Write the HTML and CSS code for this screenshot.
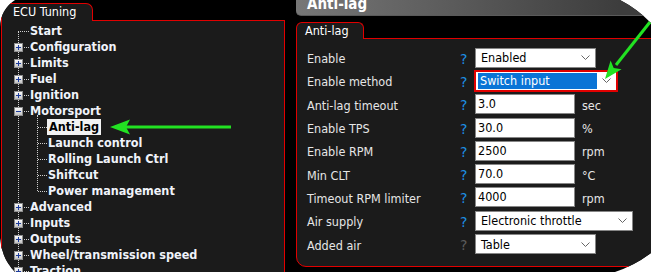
FILE: index.html
```html
<!DOCTYPE html>
<html lang="en">
	<head>
		<meta charset="UTF-8" />
		<meta name="viewport" content="width=device-width, initial-scale=1.0" />

		<link rel="stylesheet" href="styles.css">

		<title>ECU Tuning - Anti-lag</title>
	</head>
	<body>
		<div class="frame">
			<div class="nav">
				<div class="tab">ECU Tuning</div>
				<div class="nav-body">
					<div class="tree">
						<div class="node"><i class="dash long"></i><span class="label">Start</span></div>
						<div class="node"><i class="toggle plus"></i><i class="dash"></i><span class="label">Configuration</span></div>
						<div class="node"><i class="toggle plus"></i><i class="dash"></i><span class="label">Limits</span></div>
						<div class="node"><i class="toggle plus"></i><i class="dash"></i><span class="label">Fuel</span></div>
						<div class="node"><i class="toggle plus"></i><i class="dash"></i><span class="label">Ignition</span></div>
						<div class="node"><i class="toggle"></i><i class="dash"></i><span class="label">Motorsport</span></div>
						<div class="children">
							<div class="node"><i class="dash child"></i><span class="label selected">Anti-lag</span></div>
							<div class="node"><i class="dash child"></i><span class="label">Launch control</span></div>
							<div class="node"><i class="dash child"></i><span class="label">Rolling Launch Ctrl</span></div>
							<div class="node"><i class="dash child"></i><span class="label">Shiftcut</span></div>
							<div class="node"><i class="dash child"></i><span class="label">Power management</span></div>
						</div>
						<div class="node"><i class="toggle plus"></i><i class="dash"></i><span class="label">Advanced</span></div>
						<div class="node"><i class="toggle plus"></i><i class="dash"></i><span class="label">Inputs</span></div>
						<div class="node"><i class="toggle plus"></i><i class="dash"></i><span class="label">Outputs</span></div>
						<div class="node"><i class="toggle plus"></i><i class="dash"></i><span class="label">Wheel/transmission speed</span></div>
						<div class="node"><i class="toggle plus"></i><i class="dash"></i><span class="label">Traction</span></div>
					</div>
				</div>
			</div>

			<div class="detail">
				<div class="detail-title">Anti-lag</div>
				<div class="tab tab-inner">Anti-lag</div>
				<div class="detail-body">
					<div class="field">
						<span class="field-label">Enable</span>
						<span class="help">?</span>
						<div class="select">Enabled<svg width="9" height="5"><path d="M0.5 0.5 L4.5 4.5 L8.5 0.5" /></svg></div>
					</div>
					<div class="field">
						<span class="field-label">Enable method</span>
						<span class="help">?</span>
						<div class="select focus"><span class="choice">Switch input</span><svg width="9" height="5"><path d="M0.5 0.5 L4.5 4.5 L8.5 0.5" /></svg></div>
					</div>
					<div class="field">
						<span class="field-label">Anti-lag timeout</span>
						<span class="help">?</span>
						<div class="input">3.0</div>
						<span class="unit">sec</span>
					</div>
					<div class="field">
						<span class="field-label">Enable TPS</span>
						<span class="help">?</span>
						<div class="input">30.0</div>
						<span class="unit">%</span>
					</div>
					<div class="field">
						<span class="field-label">Enable RPM</span>
						<span class="help">?</span>
						<div class="input">2500</div>
						<span class="unit">rpm</span>
					</div>
					<div class="field">
						<span class="field-label">Min CLT</span>
						<span class="help">?</span>
						<div class="input">70.0</div>
						<span class="unit">°C</span>
					</div>
					<div class="field">
						<span class="field-label">Timeout RPM limiter</span>
						<span class="help">?</span>
						<div class="input">4000</div>
						<span class="unit">rpm</span>
					</div>
					<div class="field">
						<span class="field-label">Air supply</span>
						<span class="help">?</span>
						<div class="select wide">Electronic throttle<svg width="9" height="5"><path d="M0.5 0.5 L4.5 4.5 L8.5 0.5" /></svg></div>
					</div>
					<div class="field">
						<span class="field-label">Added air</span>
						<span class="help muted">?</span>
						<div class="select">Table<svg width="9" height="5"><path d="M0.5 0.5 L4.5 4.5 L8.5 0.5" /></svg></div>
					</div>
				</div>
			</div>

			<svg class="arrows" viewBox="0 0 651 272" width="651" height="272">
				<line x1="231" y1="127" x2="125" y2="127" />
				<polygon points="110,127 130,119.5 126,127 130,134.5" />
				<line x1="650" y1="22" x2="616" y2="65" />
				<polygon points="605,79 610.6,60.6 613.7,68 621.6,69.2" />
			</svg>
		</div>
	</body>
</html>
```

FILE: styles.css
```css
* {
	box-sizing: border-box;
}

body {
	margin: 0;
	background-color: #fff;
	font-family: "DejaVu Sans Condensed", "DejaVu Sans", sans-serif;
	font-stretch: condensed;
	font-size: 12.5px;
}

.frame {
	position: relative;
	display: flex;
	width: 651px;
	height: 272px;
	overflow: hidden;
	background-color: #000;
	clip-path: path("M 0 27 A 32.6 32.6 0 0 1 15 0 L 620 0 A 119 119 0 0 1 651 23 L 651 253 A 126 126 0 0 1 615 272 L 15 272 A 54 54 0 0 1 0 238 Z");
}

/* tabs */

.tab {
	position: relative;
	z-index: 1;
	width: 92px;
	height: 18px;
	margin-bottom: -1px;
	padding-left: 11px;
	line-height: 16px;
	color: #fff;
	background-color: #1b1b1b;
	border: 1px solid #e10000;
	border-bottom: none;
	border-radius: 0 7px 0 0;
}

/* tree */

.nav {
	flex: none;
	width: 284px;
	margin-left: 1px;
	padding-top: 3px;
}

.nav-body {
	height: 270px;
	padding-top: 2px;
	background-color: #1b1b1b;
	border: 1px solid #e10000;
}

.tree {
	position: relative;
	padding-left: 12px;

	&::before {
		content: "";
		position: absolute;
		left: 16px;
		top: 8px;
		bottom: 0;
		border-left: 1px dotted #cfcfcf;
	}
}

.node {
	display: flex;
	height: 16px;
}

.toggle {
	position: relative;
	z-index: 1;
	flex: none;
	width: 9px;
	height: 9px;
	margin-top: 4px;
	background: linear-gradient(#fbfbfb, #c2c2c2);
	border: 1px solid #8e8e8e;

	&::before {
		content: "";
		position: absolute;
		left: 1px;
		top: 3px;
		width: 5px;
		height: 1px;
		background-color: #1d3c9c;
	}

	&.plus::after {
		content: "";
		position: absolute;
		left: 3px;
		top: 1px;
		width: 1px;
		height: 5px;
		background-color: #1d3c9c;
	}
}

.dash {
	flex: none;
	width: 5px;
	height: 0;
	margin: 8px 0 0 1px;
	border-top: 1px dotted #cfcfcf;

	&.long {
		width: 11px;
		margin-left: 4px;
	}

	&.child {
		width: 9px;
		margin-left: 0;
	}
}

.label {
	padding: 0 1px;
	line-height: 16px;
	font-weight: bold;
	color: #f0f3fa;
	white-space: nowrap;

	&.selected {
		padding: 0 2px;
		color: #000;
		background-color: #f2f2f2;
	}
}

.children {
	position: relative;
	padding-left: 24px;

	&::before {
		content: "";
		position: absolute;
		left: 23px;
		top: -4px;
		bottom: 8px;
		border-left: 1px dotted #cfcfcf;
	}
}

/* detail pane */

.detail {
	flex: none;
	width: 380px;
	margin-left: 11px;
}

.detail-title {
	height: 16px;
	padding-left: 11px;
	font-size: 15px;
	font-weight: bold;
	line-height: 8px;
	color: #fff;
	background: linear-gradient(to right, #777, #3d3d3d 85%);
	border-bottom: 1px solid #5a5a5a;
	border-bottom-left-radius: 5px;
}

.tab-inner {
	width: 68px;
	height: 17px;
	margin-top: 6px;
	padding-left: 8px;
	line-height: 15px;
	border-radius: 6px 6px 0 0;
}

.detail-body {
	height: 229px;
	padding: 7px 0 0 10px;
	background-color: #1b1b1b;
	border: 1px solid #e10000;
	border-bottom-left-radius: 10px;
}

.field {
	display: flex;
	align-items: center;
	height: 23.3px;
	color: #e6e6e6;
}

.field-label {
	width: 153px;
	padding-top: 2px;
}

.help {
	width: 15px;
	padding-top: 2px;
	font-family: "DejaVu Sans", sans-serif;
	font-stretch: normal;
	font-size: 14px;
	color: #1e8fe3;

	&.muted {
		color: #5c5c5c;
	}
}

.input,
.select {
	height: 20px;
	color: #000;
	background-color: #fff;
	border: 1px solid #868686;
}

.input {
	width: 100px;
	padding-left: 2px;
	line-height: 18px;
}

.unit {
	margin-left: 7px;
	padding-top: 2px;
}

.select {
	display: flex;
	align-items: center;
	justify-content: space-between;
	width: 121px;
	padding: 0 5px 0 5px;

	svg {
		fill: none;
		stroke: #666;
	}

	&.wide {
		width: 158px;
	}

	&.focus {
		width: 144px;
		height: 22px;
		margin-left: -1px;
		padding: 1px 5px 1px 2px;
		border: 2px solid #e10000;
	}
}

.choice {
	width: 119px;
	height: 16px;
	padding-left: 2px;
	line-height: 16px;
	color: #fff;
	background-color: #0a74d6;
}

.arrows {
	position: absolute;
	left: 0;
	top: 0;
	pointer-events: none;

	line {
		stroke: #22e222;
		stroke-width: 3;
	}

	polygon {
		fill: #22e222;
	}
}
```
